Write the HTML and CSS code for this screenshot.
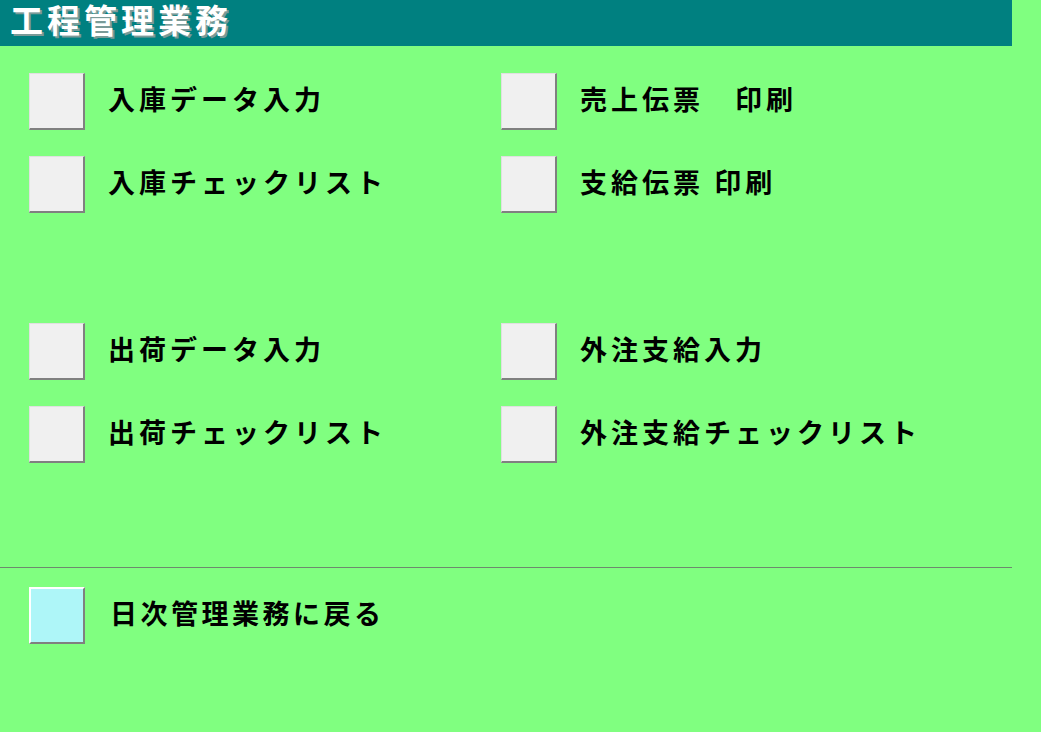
FILE: index.html
```html
<!DOCTYPE html>
<html lang="ja">
<head>
    <meta charset="UTF-8">
    <title>工程管理業務</title>
    <link rel="stylesheet" href="styles.css">
</head>
<body>
    <div class="title-bar">
        <h1>工程管理業務</h1>
    </div>

    <div class="menu">
        <div class="menu-group">
            <div class="menu-item"><button class="menu-btn"></button><span class="menu-label">入庫データ入力</span></div>
            <div class="menu-item"><button class="menu-btn"></button><span class="menu-label">売上伝票　印刷</span></div>
            <div class="menu-item"><button class="menu-btn"></button><span class="menu-label">入庫チェックリスト</span></div>
            <div class="menu-item"><button class="menu-btn"></button><span class="menu-label">支給伝票 印刷</span></div>
        </div>

        <div class="menu-group group-gap">
            <div class="menu-item"><button class="menu-btn"></button><span class="menu-label">出荷データ入力</span></div>
            <div class="menu-item"><button class="menu-btn"></button><span class="menu-label">外注支給入力</span></div>
            <div class="menu-item"><button class="menu-btn"></button><span class="menu-label">出荷チェックリスト</span></div>
            <div class="menu-item"><button class="menu-btn"></button><span class="menu-label">外注支給チェックリスト</span></div>
        </div>
    </div>

    <div class="divider"></div>

    <div class="menu back">
        <div class="menu-item"><button class="menu-btn back-btn"></button><span class="menu-label back-label">日次管理業務に戻る</span></div>
    </div>
</body>
</html>
```

FILE: styles.css
```css
:root {
    --bg-color: #80FF80;
    --bar-color: #008080;
    --btn-face: #F0F0F0;
    --btn-shadow: #808080;
}

body {
    margin: 0;
    background-color: var(--bg-color);
    font-family: "Noto Sans CJK JP", "Noto Sans", sans-serif;
    color: #000;
    min-height: 100vh;
}

.title-bar {
    width: 1012px;
    height: 46px;
    box-sizing: border-box;
    padding-top: 2px;
    background-color: var(--bar-color);
    display: flex;
    align-items: flex-start;
}

h1 {
    margin: 0 0 0 10px;
    font-size: 33px;
    font-weight: 700;
    letter-spacing: 4px;
    color: #fff;
    line-height: 34px;
    text-shadow: 2px 2px 0 #7a9a98;
}

.menu {
    padding-left: 29px;
    padding-top: 27px;
}

.menu-group {
    display: grid;
    grid-template-columns: 472px 472px;
    row-gap: 27px;
}

.group-gap {
    margin-top: 111px;
}

.menu-item {
    display: flex;
    align-items: center;
    height: 56px;
}

.menu-btn {
    width: 56px;
    height: 57px;
    padding: 0;
    background-color: var(--btn-face);
    border-top: 1px solid #e0e0e0;
    border-left: 1px solid #e0e0e0;
    border-right: 2px solid var(--btn-shadow);
    border-bottom: 2px solid var(--btn-shadow);
    box-sizing: border-box;
    flex-shrink: 0;
}

.menu-label {
    margin-left: 23px;
    margin-bottom: 3px;
    font-size: 27px;
    font-weight: 700;
    letter-spacing: 4px;
    line-height: 1.2;
    white-space: pre;
}

.divider {
    width: 1012px;
    height: 1px;
    background-color: #6e8a6e;
    margin-top: 105px;
}

.back {
    padding-top: 19px;
}

.back-btn {
    background-color: #AEF6F8;
    border-top: 2px solid #fff;
    border-left: 2px solid #fff;
}

.back-label {
    margin-left: 25px;
    letter-spacing: 3.5px;
}
```
